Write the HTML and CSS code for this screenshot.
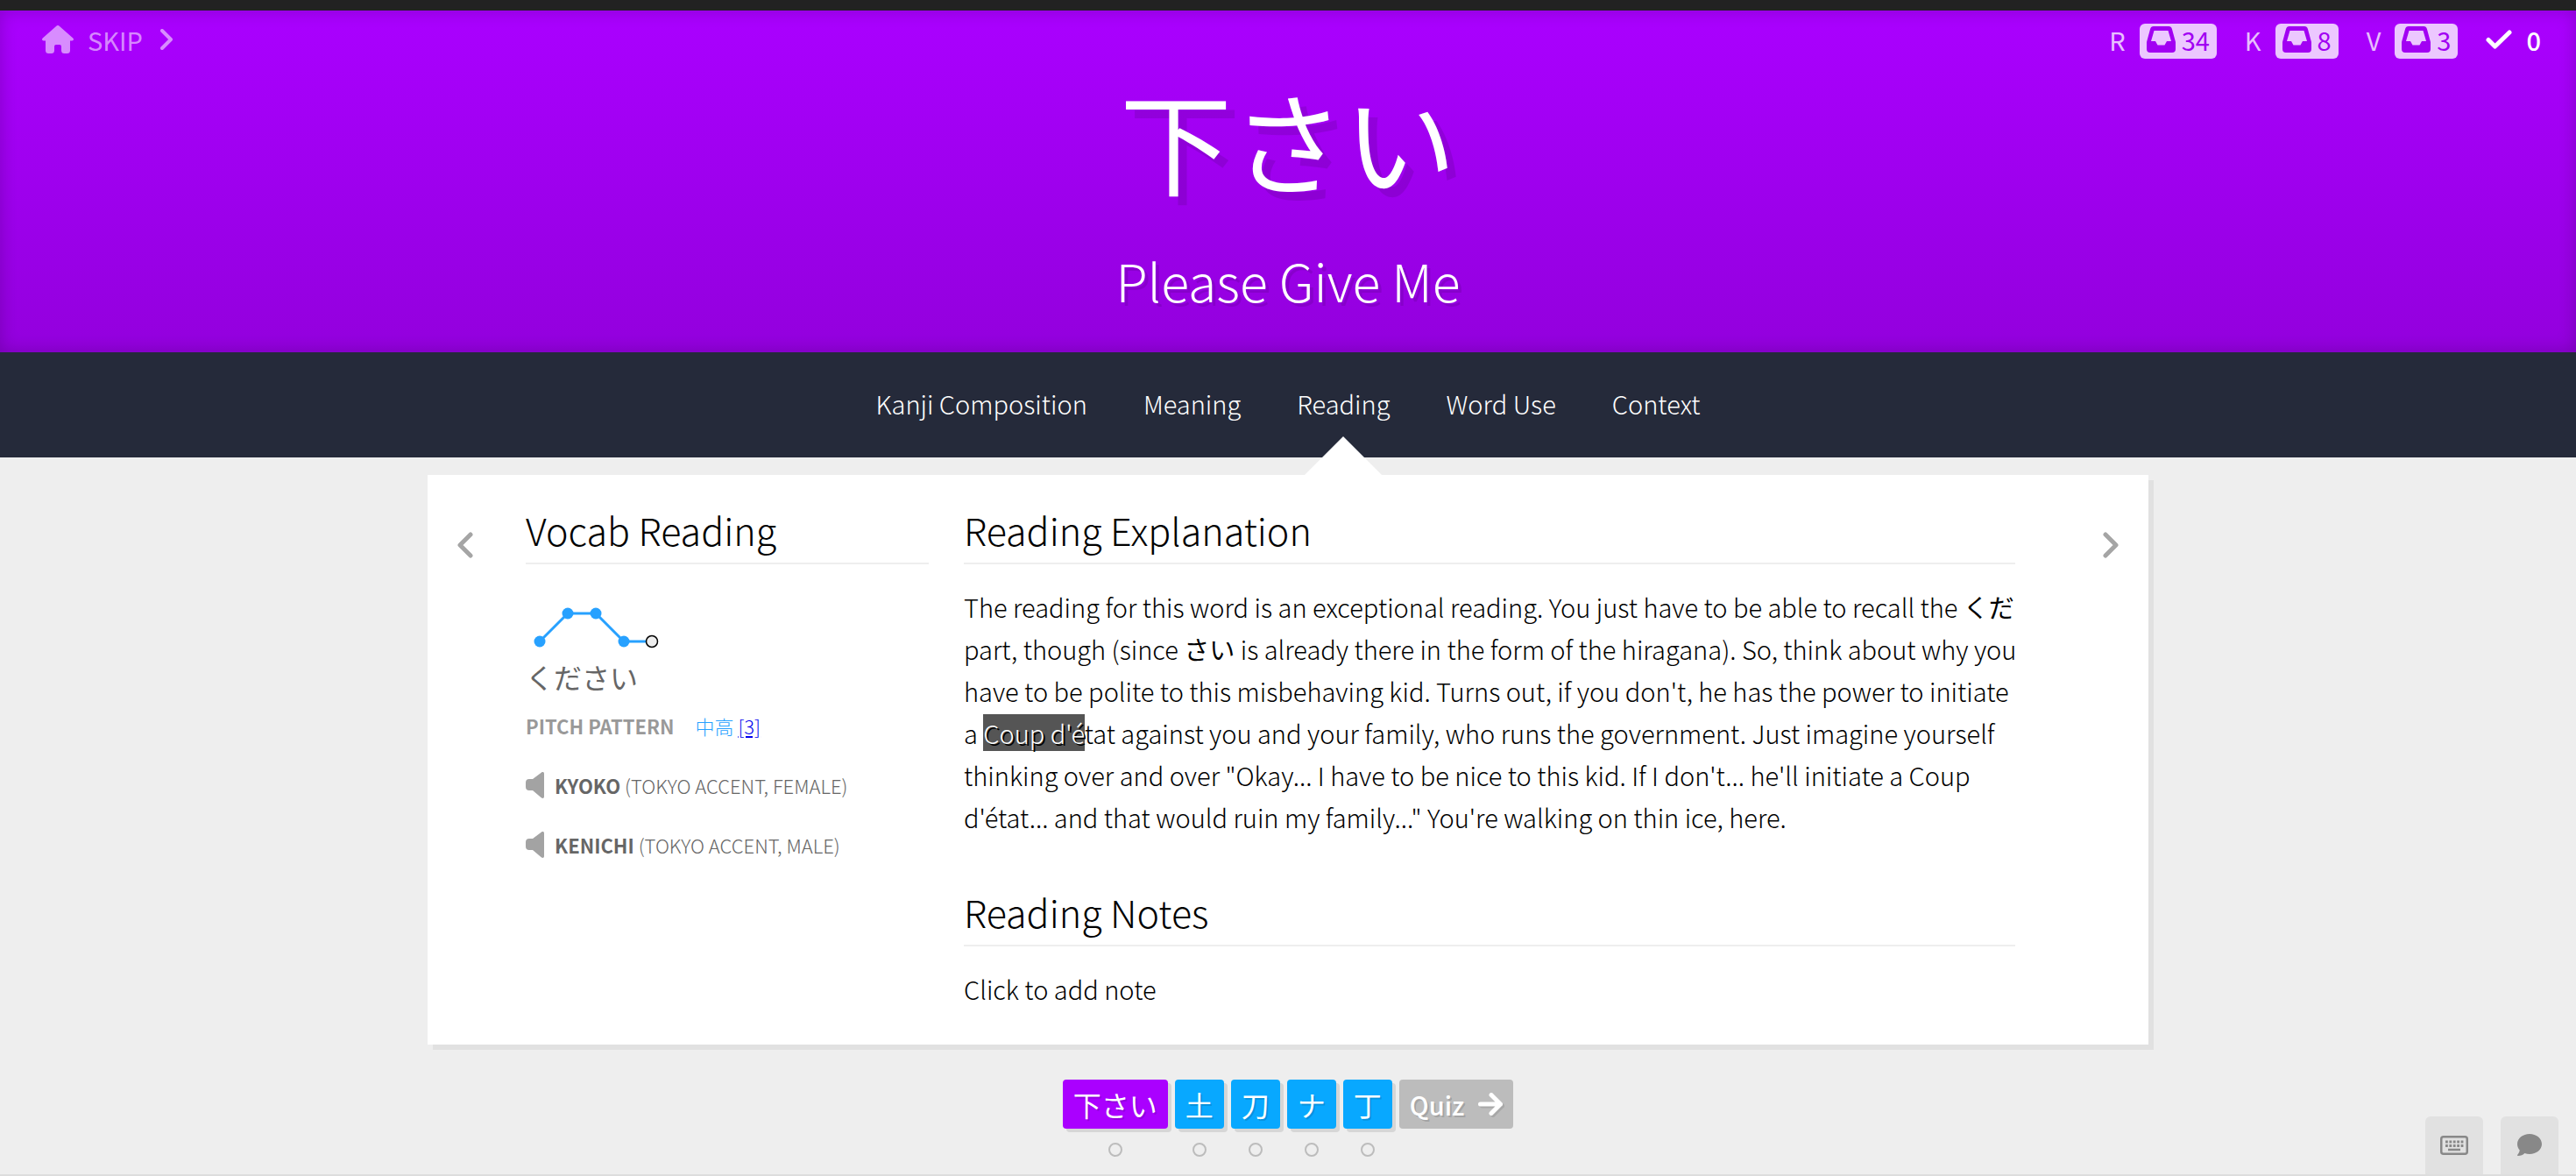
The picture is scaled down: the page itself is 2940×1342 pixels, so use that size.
FILE: index.html
```
<!DOCTYPE html>
<html lang="en">
<head>
    <meta charset="utf-8">
    <title>Lessons</title>
    <link rel="stylesheet" href="styles.css">
</head>
<body>
    <header class="lesson-header">
        <div class="top-menu">
            <div class="menu-left">
                <a class="menu-link" href="#" aria-label="Home">
                    <svg width="36" height="32" viewBox="0 0 36 32"><path fill="currentColor" d="M16.600 .6a2 2 0 0 1 2.800 0L35.300 14.400c1.300 1.200.6 3.100-1.100 3.100H32V28.500a3.500 3.500 0 0 1-3.500 3.500h-3a3.500 3.500 0 0 1-3.500-3.500V24a2 2 0 0 0-2-2h-4a2 2 0 0 0-2 2v4.500a3.500 3.500 0 0 1-3.500 3.500h-3A3.500 3.500 0 0 1 4 28.500V17.500H1.800C.1 17.500-.6 15.600.7 14.400z"/></svg>
                </a>
                <a class="menu-link" href="#">
                    SKIP
                    <svg width="14" height="24" viewBox="0 0 14 24"><path class="line" d="M2 2l10 10L2 22"/></svg>
                </a>
            </div>
            <div class="menu-right">
                <div class="stat">R
                    <span class="badge"><svg width="33" height="30" viewBox="0 0 33 30"><use href="#inbox"/></svg>34</span>
                </div>
                <div class="stat">K
                    <span class="badge"><svg width="33" height="30" viewBox="0 0 33 30"><use href="#inbox"/></svg>8</span>
                </div>
                <div class="stat">V
                    <span class="badge"><svg width="33" height="30" viewBox="0 0 33 30"><use href="#inbox"/></svg>3</span>
                </div>
                <div class="stat done">
                    <svg width="30" height="22" viewBox="0 0 30 22"><path class="check" d="M3 11.500l7.500 7.500L27 3"/></svg>
                    0
                </div>
            </div>
        </div>
        <h1 class="character" lang="ja">下さい</h1>
        <p class="meaning">Please Give Me</p>
    </header>

    <nav class="tabs">
        <a class="tab" href="#">Kanji Composition</a>
        <a class="tab" href="#">Meaning</a>
        <a class="tab active" href="#">Reading</a>
        <a class="tab" href="#">Word Use</a>
        <a class="tab" href="#">Context</a>
    </nav>

    <main class="lesson">
        <section class="card">
            <button class="arrow" type="button" aria-label="Previous">
                <svg width="18" height="30" viewBox="0 0 18 30"><path class="line" d="M15 3L3 15l12 12"/></svg>
            </button>
            <div class="side">
                <h2>Vocab Reading</h2>
                <svg class="pitch-graph" width="160" height="48" viewBox="0 0 160 48">
                    <polyline points="16,40 48,8 80,8 112,40 144,40" fill="none" stroke="#27a1ff" stroke-width="3"/>
                    <g fill="#27a1ff">
                        <circle cx="16" cy="40" r="6.500"/>
                        <circle cx="48" cy="8" r="6.500"/>
                        <circle cx="80" cy="8" r="6.500"/>
                        <circle cx="112" cy="40" r="6.500"/>
                    </g>
                    <circle cx="144" cy="40" r="6.500" fill="#eee" stroke="#000" stroke-width="1.500"/>
                </svg>
                <p class="kana" lang="ja">ください</p>
                <p class="pitch"><b>PITCH PATTERN</b> <span><span class="pattern" lang="ja">中高</span> <a href="#">[3]</a></span></p>
                <button class="audio" type="button">
                    <svg width="21" height="30" viewBox="0 0 21 30"><use href="#speaker"/></svg>
                    <span><b>KYOKO</b> (TOKYO ACCENT, FEMALE)</span>
                </button>
                <button class="audio" type="button">
                    <svg width="21" height="30" viewBox="0 0 21 30"><use href="#speaker"/></svg>
                    <span><b>KENICHI</b> (TOKYO ACCENT, MALE)</span>
                </button>
            </div>
            <div class="content">
                <h2>Reading Explanation</h2>
                <p>
                    The reading for this word is an exceptional reading. You just have to be able to recall the <span class="ja" lang="ja">くだ</span><br>
                    part, though (since <span class="ja" lang="ja">さい</span> is already there in the form of the hiragana). So, think about why you<br>
                    have to be polite to this misbehaving kid. Turns out, if you don't, he has the power to initiate<br>
                    a <mark>Coup d'é</mark>tat against you and your family, who runs the government. Just imagine yourself<br>
                    thinking over and over "Okay... I have to be nice to this kid. If I don't... he'll initiate a Coup<br>
                    d'état... and that would ruin my family..." You're walking on thin ice, here.
                </p>
                <h2>Reading Notes</h2>
                <button class="note" type="button">Click to add note</button>
            </div>
            <button class="arrow" type="button" aria-label="Next">
                <svg width="18" height="30" viewBox="0 0 18 30"><path class="line" d="M3 3l12 12L3 27"/></svg>
            </button>
        </section>

        <ul class="batch">
            <li><a class="item vocab" href="#" lang="ja">下さい</a><span class="dot"></span></li>
            <li><a class="item" href="#" lang="ja">土</a><span class="dot"></span></li>
            <li><a class="item" href="#" lang="ja">刀</a><span class="dot"></span></li>
            <li><a class="item" href="#" lang="ja">ナ</a><span class="dot"></span></li>
            <li><a class="item" href="#" lang="ja">丁</a><span class="dot"></span></li>
            <li>
                <a class="item quiz" href="#">Quiz
                    <svg width="28" height="26" viewBox="0 0 28 26"><path class="line" d="M2.500 13h23M15 2.500L25.500 13 15 23.500"/></svg>
                </a>
            </li>
        </ul>
    </main>

    <div class="tools">
        <button class="tool" type="button" aria-label="Keyboard shortcuts">
            <svg width="32" height="22" viewBox="0 0 32 22">
                <rect x="1.250" y="1.250" width="29.500" height="19.500" rx="2.500" fill="none" stroke="currentColor" stroke-width="2.500"/>
                <path d="M6 7h21M6 11.500h21" stroke="currentColor" stroke-width="2.800" stroke-dasharray="2.800 1.600" fill="none"/>
                <path d="M9 16h14" stroke="currentColor" stroke-width="2.500"/>
            </svg>
        </button>
        <button class="tool" type="button" aria-label="Chat">
            <svg width="28" height="26" viewBox="0 0 28 26"><path fill="currentColor" d="M14 0c7.700 0 14 5.100 14 11.500S21.700 23 14 23c-2 0-3.900-.3-5.600-1C6.800 23.800 4 25 .8 25c-.8 0-1-.8-.5-1.300C1.600 22.300 2.500 20.500 2.700 18.600 1 16.600 0 14.200 0 11.500 0 5.100 6.300 0 14 0z"/></svg>
        </button>
    </div>

    <!-- shared icons -->
    <svg class="sprite" width="0" height="0">
        <symbol id="inbox" viewBox="0 0 33 30">
            <path fill="currentColor" fill-rule="evenodd" d="M8 0h17a4 4 0 0 1 3.900 3L33 18v8a4 4 0 0 1-4 4H4a4 4 0 0 1-4-4v-8L4.100 3A4 4 0 0 1 8 0zM8.500 5L5 17h5l2.500 4.500h8L23 17h5L24.500 5z"/>
        </symbol>
        <symbol id="speaker" viewBox="0 0 21 30">
            <path fill="currentColor" d="M0 12a4 4 0 0 1 4-4h4L18 .6C19.500-.4 21 .2 21 2v26c0 1.800-1.500 2.400-3 1.400L8 21H4a4 4 0 0 1-4-4z"/>
        </symbol>
    </svg>
</body>
</html>
```
FILE: styles.css
```
* {
    box-sizing: border-box;
}

body {
    font-family: 'Noto Sans CJK JP', sans-serif;
    font-size: 29px;
    font-weight: 300;
    line-height: 48px;
    color: #000;
    background-color: #eee;
    margin: 0;
    min-height: 100vh;
    border-top: 12px solid #222;
    border-bottom: 2px solid #ddd;
}

h1, h2, p, ul {
    margin: 0;
    padding: 0;
    font-weight: 300;
}

b {
    font-weight: 700;
}

a {
    color: inherit;
    text-decoration: none;
}

button {
    font: inherit;
    color: inherit;
    background: none;
    border: none;
    padding: 0;
    cursor: pointer;
}

svg {
    display: block;
    flex: none;
}

.sprite {
    position: absolute;
}

.line, .check {
    fill: none;
    stroke: currentColor;
    stroke-width: 5;
    stroke-linecap: round;
    stroke-linejoin: round;
}

.menu-link .line {
    stroke-width: 4;
}

/* header */
.lesson-header {
    background: linear-gradient(#aa00ff, #9300dd);
    box-shadow: inset 0 0 20px rgba(0,0,0,0.2);
    color: #fff;
    text-align: center;
    padding: 13px 0 42px;
}

.top-menu, .menu-left, .menu-right, .menu-link, .stat, .badge {
    display: flex;
    align-items: center;
}

.top-menu {
    justify-content: space-between;
    height: 40px;
    padding: 0 40px 0 48px;
    font-weight: 400;
    line-height: 36px;
    margin-bottom: 30px;
}

.menu-left {
    gap: 16px;
}

.menu-link {
    gap: 20px;
    color: rgba(255,255,255,0.55);
}

.menu-right {
    gap: 32px;
}

.stat {
    gap: 16px;
    color: rgba(255,255,255,0.75);
}

.stat.done {
    color: #fff;
    font-weight: 500;
}

.badge {
    gap: 7px;
    height: 40px;
    margin-top: 4px;
    padding: 0 8px 4px;
    border-radius: 6px;
    background-color: rgba(255,255,255,0.78);
    color: #a200f3;
}

.character {
    font-size: 128px;
    font-weight: 400;
    line-height: 128px;
    text-shadow: 10px 10px 0 rgba(0,0,0,0.1);
    margin-bottom: 57px;
}

.meaning {
    font-size: 59px;
    line-height: 80px;
    text-shadow: 4px 4px 0 rgba(0,0,0,0.1);
}

/* tabs */
.tabs {
    display: flex;
    justify-content: center;
    gap: 64px;
    background-color: #252a3a;
    color: #fff;
    line-height: 116px;
    padding-bottom: 4px;
}

.tab {
    position: relative;
}

.tab.active::after {
    content: '';
    position: absolute;
    left: 50%;
    bottom: -24px;
    margin-left: -44px;
    border: 44px solid transparent;
    border-top: none;
    border-bottom-color: #fff;
}

/* card */
.card {
    display: flex;
    align-items: flex-start;
    width: 66.8%;
    margin: 20px auto 40px;
    padding: 34px;
    background-color: #fff;
    box-shadow: 6px 6px 0 #e1e1e1;
}

.arrow {
    width: 18px;
    margin-top: 31px;
    color: #a5a5a5;
}

.side {
    flex: 23;
    margin-left: 60px;
}

.content {
    flex: 60;
    margin: 0 100px 0 40px;
}

h2 {
    font-size: 43px;
    line-height: 56px;
    padding-bottom: 10px;
    border-bottom: 2px solid #eee;
    margin-bottom: 24px;
}

.content p {
    margin: 0 -20px 56px 0;
}

.ja {
    font-weight: 400;
}

mark {
    background-color: #555;
    color: #fff;
    text-shadow: 2px 2px 0 #000;
}

.note {
    display: block;
    margin-bottom: 6px;
}

.pitch-graph {
    margin-top: 48px;
}

.kana {
    font-size: 32px;
    font-weight: 400;
    line-height: 48px;
    color: #666;
    margin: 8px 0 16px;
}

.pitch {
    display: flex;
    gap: 24px;
    font-size: 22px;
    line-height: 32px;
    margin-bottom: 36px;
}

.pitch b {
    color: #999;
}

.pattern {
    color: #27a1ff;
}

.pitch a {
    color: #0000ee;
    text-decoration: underline;
}

.audio {
    display: flex;
    align-items: center;
    gap: 12px;
    font-size: 22px;
    line-height: 32px;
    color: #666;
    margin-bottom: 36px;
}

.audio svg {
    color: #a3a3a3;
}

/* lesson batch */
.batch {
    display: flex;
    justify-content: center;
    gap: 8px;
    list-style: none;
}

.batch li {
    display: flex;
    flex-direction: column;
    align-items: center;
    gap: 16px;
}

.item {
    display: flex;
    align-items: center;
    gap: 16px;
    height: 56px;
    padding: 0 12px;
    border-radius: 4px;
    background-color: #08a8ff;
    box-shadow: 4px 4px 0 #d6d6d6;
    color: #fff;
    font-size: 32px;
    font-weight: 400;
    text-shadow: 2px 2px 0 rgba(0,0,0,0.15);
}

.item.vocab {
    background-color: #aa00ff;
}

.item.quiz {
    background-color: #bcbcbc;
    box-shadow: none;
    font-size: 29px;
    font-weight: 500;
}

.quiz svg {
    filter: drop-shadow(2px 2px 0 rgba(0,0,0,0.1));
}

.dot {
    width: 16px;
    height: 16px;
    border: 2px solid #bcbcbc;
    border-radius: 50%;
}

/* bottom right buttons */
.tools {
    position: fixed;
    right: 20px;
    bottom: 2px;
    display: flex;
    gap: 20px;
}

.tool {
    display: flex;
    align-items: center;
    justify-content: center;
    width: 66px;
    height: 66px;
    border-radius: 6px 6px 0 0;
    background-color: #e1e1e1;
    color: #888;
}
```
